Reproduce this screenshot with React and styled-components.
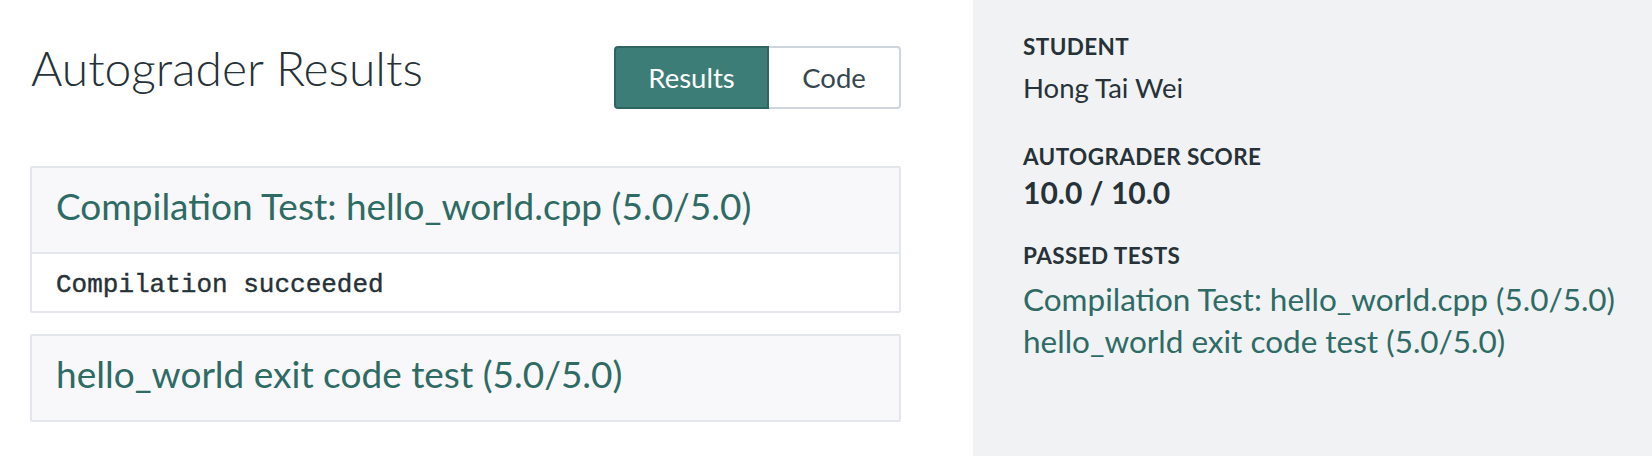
import React from 'react';
import styled, { createGlobalStyle } from 'styled-components';

const GlobalStyle = createGlobalStyle`
  html, body {
    margin: 0;
    padding: 0;
    background: #ffffff;
  }
  body {
    font-family: Lato, "Liberation Sans", sans-serif;
    color: #263238;
  }
  * {
    box-sizing: border-box;
  }
`;

const Page = styled.div`
  display: flex;
  min-height: 456px;
`;

const Main = styled.main`
  flex: 1;
  padding: 0 72px 0 30px;
`;

const TopBar = styled.div`
  display: flex;
  justify-content: space-between;
  align-items: flex-start;
  height: 166px;
`;

const Title = styled.h1`
  margin: 39px 0 0 1px;
  font-size: 48px;
  line-height: 58px;
  font-weight: 300;
  color: #263238;
`;

const Toggle = styled.div`
  display: flex;
  margin-top: 46px;
`;

const ToggleButton = styled.button`
  height: 63px;
  width: ${(p) => p.$width}px;
  font-family: inherit;
  font-size: 27.5px;
  border: 2px solid ${(p) => (p.$active ? '#2f6561' : '#cfd5dc')};
  background: ${(p) => (p.$active ? '#3d7d78' : '#ffffff')};
  color: ${(p) => (p.$active ? '#ffffff' : '#37474f')};
  border-radius: ${(p) => (p.$first ? '4px 0 0 4px' : '0 4px 4px 0')};
  border-left-width: ${(p) => (p.$first ? '2px' : '0')};
  padding: 0;
`;

const Card = styled.section`
  border: 2px solid #e3e6ea;
  border-radius: 2px;
  margin-bottom: 21px;
`;

const CardHeader = styled.div`
  background: #f8f8fa;
  padding: 16px 24px 0;
  height: 84px;
  font-size: 37px;
  line-height: 44px;
  color: #2e6b65;
`;

const CardBody = styled.pre`
  margin: 0;
  border-top: 2px solid #e3e6ea;
  padding: 16px 24px 0;
  height: 59px;
  font-family: "Liberation Mono", monospace;
  font-size: 26px;
  line-height: 30px;
  color: #263238;
  background: #ffffff;
  -webkit-text-stroke: 0.4px #263238;
`;

const Side = styled.aside`
  width: 679px;
  background: #f1f2f4;
  padding: 33px 0 0 50px;
`;

const Label = styled.div`
  font-size: 22.5px;
  line-height: 27px;
  font-weight: 700;
  letter-spacing: 0.4px;
  color: #263238;
  text-transform: uppercase;
  margin-top: ${(p) => p.$gap || 0}px;
`;

const Value = styled.div`
  font-size: 27.5px;
  line-height: 33px;
  color: #263238;
  margin-top: 11px;
`;

const Score = styled.div`
  font-size: 30px;
  line-height: 36px;
  font-weight: 700;
  color: #263238;
  margin-top: 4px;
`;

const TestList = styled.ul`
  list-style: none;
  margin: 9px 0 0;
  padding: 0;
`;

const TestLink = styled.li`
  font-size: 31.5px;
  line-height: 42px;
  color: #2e6b65;
`;

const tests = [
  { name: 'Compilation Test: hello_world.cpp', score: '5.0/5.0', output: 'Compilation succeeded' },
  { name: 'hello_world exit code test', score: '5.0/5.0' },
];

export default function App() {
  return (
    <>
      <GlobalStyle />
      <Page>
        <Main>
          <TopBar>
            <Title>Autograder Results</Title>
            <Toggle>
              <ToggleButton $active $first $width={155}>Results</ToggleButton>
              <ToggleButton $width={132}>Code</ToggleButton>
            </Toggle>
          </TopBar>
          {tests.map((t, i) => (
            <Card key={i}>
              <CardHeader>{t.name} ({t.score})</CardHeader>
              {t.output && <CardBody>{t.output}</CardBody>}
            </Card>
          ))}
        </Main>
        <Side>
          <Label>Student</Label>
          <Value>Hong Tai Wei</Value>
          <Label $gap={39}>Autograder Score</Label>
          <Score>10.0 / 10.0</Score>
          <Label $gap={32}>Passed Tests</Label>
          <TestList>
            {tests.map((t, i) => (
              <TestLink key={i}>{t.name} ({t.score})</TestLink>
            ))}
          </TestList>
        </Side>
      </Page>
    </>
  );
}
